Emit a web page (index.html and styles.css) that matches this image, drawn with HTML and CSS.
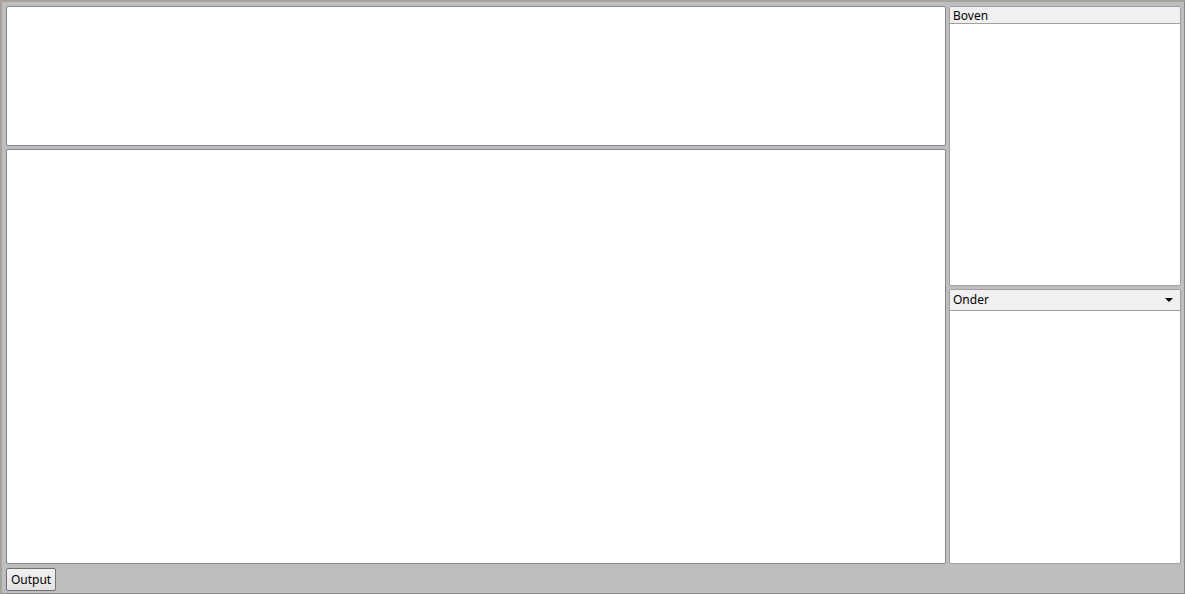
FILE: index.html
```html
<!DOCTYPE html>
<html lang="nl">
<head>
  <meta charset="UTF-8">
  <title>Werkruimte</title>
  <link rel="stylesheet" href="styles.css">
</head>
<body>
  <div class="window">
    <div class="workspace">
      <div class="column main">
        <div class="panel editor-top"></div>
        <div class="panel editor-bottom"></div>
      </div>
      <div class="column side">
        <div class="panel side-top">
          <div class="panel-header">Boven</div>
        </div>
        <div class="panel side-bottom">
          <div class="panel-header select">
            <span>Onder</span>
            <span class="arrow"></span>
          </div>
        </div>
      </div>
    </div>
    <div class="statusbar">
      <button class="button">Output</button>
    </div>
  </div>
</body>
</html>
```

FILE: styles.css
```css
:root {
  --frame: #bebebe;
  --panel-border: #828790;
  --header-bg: #f0f0f0;
  --text: #000;
}

* {
  margin: 0;
  padding: 0;
  box-sizing: border-box;
}

html, body {
  height: 100%;
}

body {
  font-family: 'Noto Sans', 'Open Sans', sans-serif;
  font-size: 12px;
  color: var(--text);
  background-color: var(--frame);
}

.window {
  height: 594px;
  display: flex;
  flex-direction: column;
  background-color: var(--frame);
  border-style: solid;
  border-color: #a8a29c #8a8a8a #8a8a8a #a8a29c;
  border-width: 2px 1px 1px 2px;
  padding: 4px 3px 0 4px;
}

.workspace {
  display: flex;
  gap: 3px;
  height: 558px;
}

.column {
  display: flex;
  flex-direction: column;
  gap: 3px;
}

.main {
  width: 940px;
}

.side {
  width: 232px;
}

.panel {
  background-color: #fff;
  border: 1px solid var(--panel-border);
  border-radius: 2px;
  overflow: hidden;
}

.editor-top {
  height: 140px;
}

.editor-bottom {
  flex: 1;
}

.side-top {
  height: 280px;
  border-color: #a0a0a0;
}

.side-bottom {
  flex: 1;
  border-color: #a0a0a0;
}

.panel-header {
  height: 17px;
  line-height: 15px;
  padding: 1px 0 0 3px;
  background-color: var(--header-bg);
  border-bottom: 1px solid #a0a0a0;
}

.panel-header.select {
  height: 21px;
  line-height: 20px;
  padding-top: 0;
  display: flex;
  justify-content: space-between;
  align-items: center;
  padding-right: 7px;
}

.arrow {
  width: 0;
  height: 0;
  border-left: 4px solid transparent;
  border-right: 4px solid transparent;
  border-top: 4px solid #000;
}

.statusbar {
  padding-top: 4px;
}

.button {
  font-family: inherit;
  font-size: 12px;
  height: 23px;
  width: 50px;
  color: var(--text);
  background: linear-gradient(#f2f2f2, #e3e3e3);
  border: 1px solid #707070;
  border-radius: 2px;
  cursor: pointer;
}
```
